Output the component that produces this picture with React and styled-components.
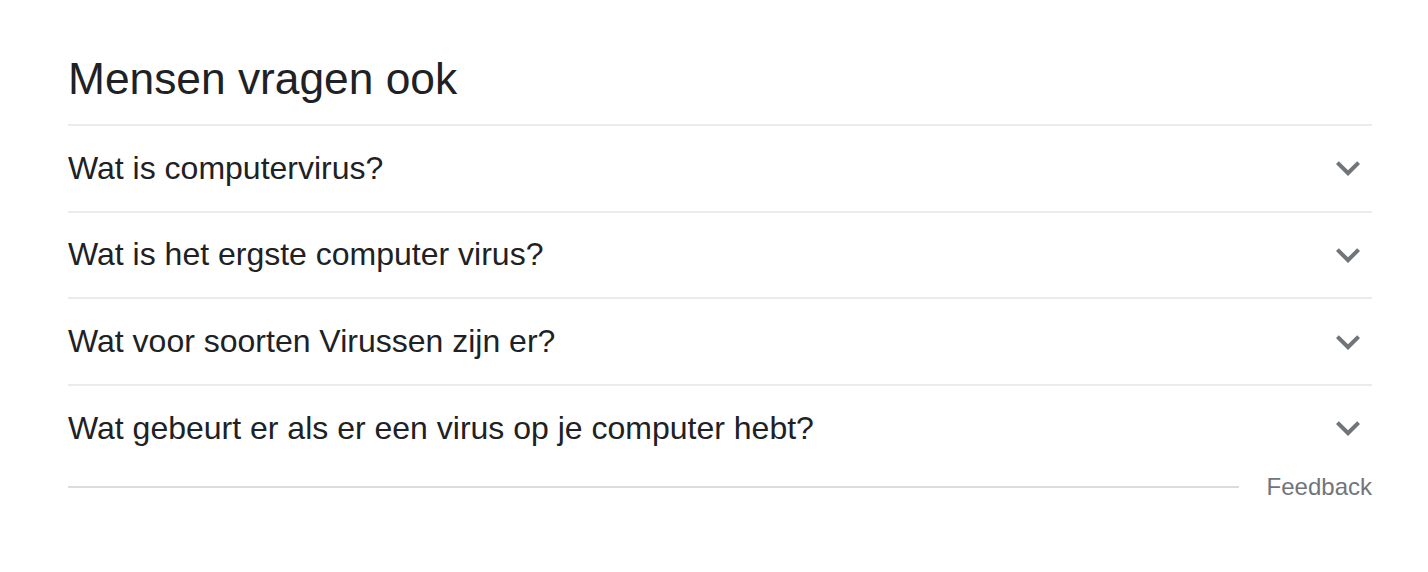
import styled, { createGlobalStyle } from "styled-components";

const Global = createGlobalStyle`
  body {
    margin: 0;
    background: #fff;
    font-family: Arial, "Liberation Sans", sans-serif;
  }
`;

const Wrapper = styled.div`
  width: 1304px;
  padding: 51px 0 0 68px;
`;

const Heading = styled.h2`
  margin: 0;
  font-size: 44.3px;
  font-weight: 400;
  line-height: 56px;
  color: #202124;
  padding-bottom: 17px;
`;

const List = styled.div`
  border-top: 2px solid #ebebeb;
`;

const Row = styled.div`
  display: flex;
  align-items: center;
  justify-content: space-between;
  height: 84.67px;
  border-bottom: 2px solid #ebebeb;

  &:last-child {
    border-bottom: none;
  }
`;

const Question = styled.span`
  font-size: 32px;
  color: #202124;
`;

const Chevron = styled.svg`
  width: 48px;
  height: 48px;
  fill: #70757a;
`;

const Footer = styled.div`
  display: flex;
  align-items: center;
  gap: 28px;
  margin-top: 2px;
`;

const Line = styled.div`
  flex: 1;
  height: 2px;
  background: #dadce0;
`;

const FeedbackLink = styled.span`
  font-size: 24px;
  color: #70757a;
`;

const questions = [
  "Wat is computervirus?",
  "Wat is het ergste computer virus?",
  "Wat voor soorten Virussen zijn er?",
  "Wat gebeurt er als er een virus op je computer hebt?",
];

export default function App() {
  return (
    <>
      <Global />
      <Wrapper>
        <Heading>Mensen vragen ook</Heading>
        <List>
          {questions.map((q) => (
            <Row key={q}>
              <Question>{q}</Question>
              <Chevron viewBox="0 0 24 24">
                <path d="M16.59 8.59L12 13.17 7.41 8.59 6 10l6 6 6-6z" />
              </Chevron>
            </Row>
          ))}
        </List>
        <Footer>
          <Line />
          <FeedbackLink>Feedback</FeedbackLink>
        </Footer>
      </Wrapper>
    </>
  );
}
